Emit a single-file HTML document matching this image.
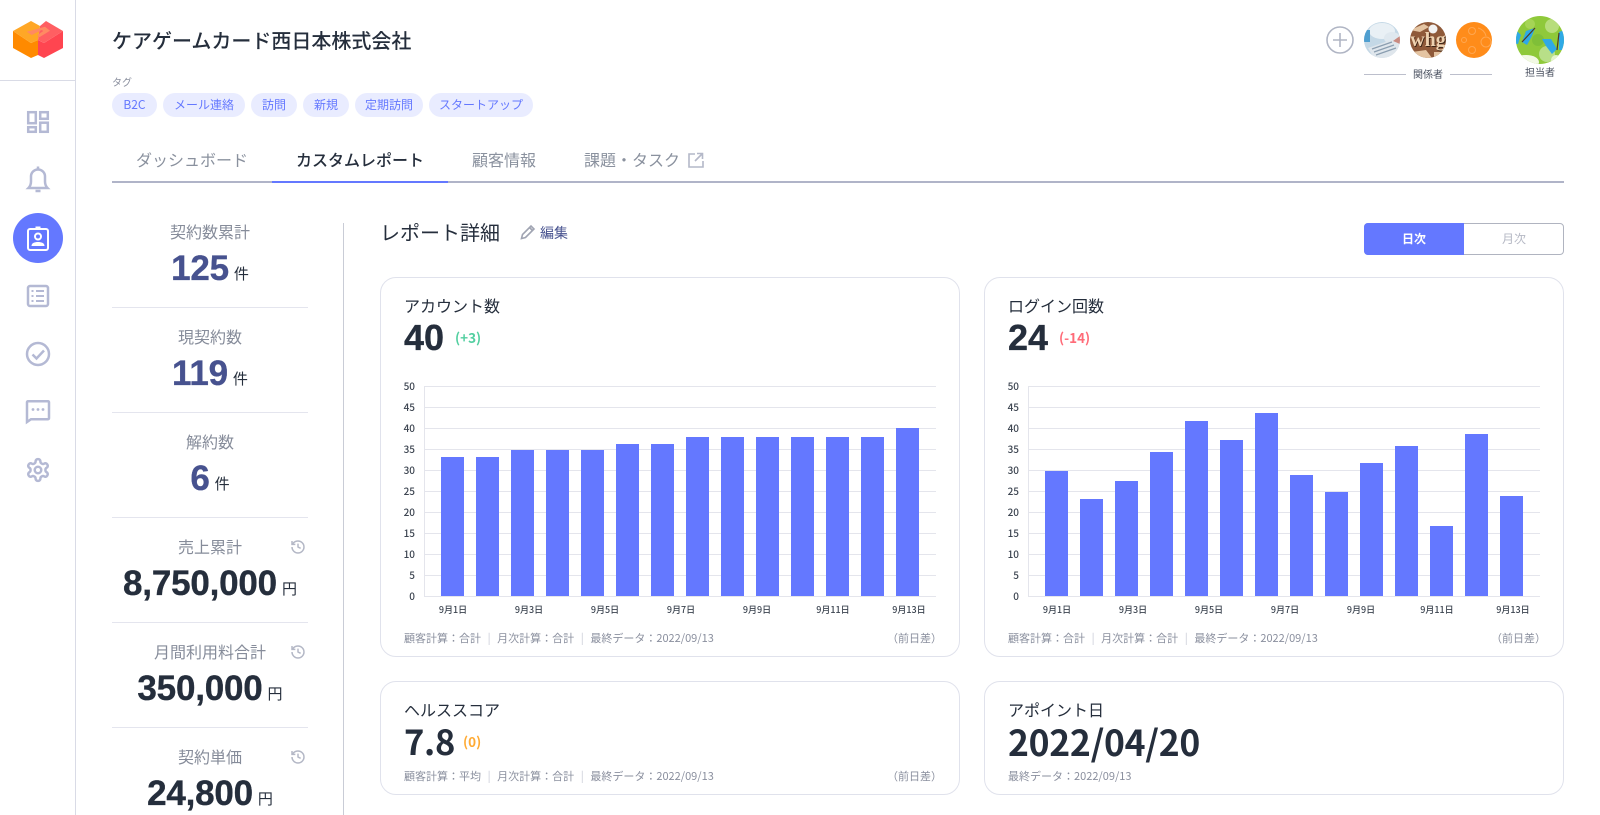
<!DOCTYPE html>
<html lang="ja"><head><meta charset="utf-8"><title>カスタムレポート</title>
<style>
*{box-sizing:border-box}
html,body{margin:0;padding:0;width:1600px;height:815px;overflow:hidden;background:#fff}
body{position:relative;font-family:"Noto Sans CJK JP","Liberation Sans",sans-serif;color:#252e3c}
.a{position:absolute;white-space:nowrap}
.c{text-align:center}
.chip{position:absolute;top:93px;height:24px;line-height:23px;border-radius:12px;background:#e9ecff;color:#6478ff;font-size:12px;text-align:center;white-space:nowrap}
.tab{position:absolute;top:147px;line-height:24px;font-size:16px;color:#8a919e;white-space:nowrap}
.lab{position:absolute;left:112px;width:196px;text-align:center;font-size:16px;line-height:24px;color:#868c9a}
.val{position:absolute;left:112px;width:196px;text-align:center;white-space:nowrap;font:700 35px/40px "Liberation Sans",sans-serif;-webkit-text-stroke:.35px currentColor;letter-spacing:-.2px}
.val span{font:400 15px/20px "Noto Sans CJK JP",sans-serif;margin-left:5px;-webkit-text-stroke:0;letter-spacing:0;position:relative;top:-1px}
.hr{position:absolute;left:112px;width:196px;height:1px;background:#e4e5ee}
.card{position:absolute;width:580px;border:1px solid #e0e2ec;border-radius:16px;background:#fff}
.tt{position:absolute;font-size:16px;line-height:24px;white-space:nowrap}
.num{position:absolute;font:700 36px/40px "Liberation Sans",sans-serif;white-space:nowrap;-webkit-text-stroke:.35px currentColor}
.num.n{font-family:"Noto Sans CJK JP",sans-serif;-webkit-text-stroke:0;font-size:34.5px;letter-spacing:-.3px}
.dif{position:absolute;font-size:13.500px;line-height:20px;font-weight:700;white-space:nowrap}
.ft{position:absolute;font-size:11px;line-height:16px;color:#8a8f9e;white-space:nowrap}
.ft i{font-style:normal;color:#c8cad6;margin:0 6.600px}
svg{position:absolute;overflow:visible}
</style></head><body>

<!-- sidebar -->
<div class="a" style="left:75px;top:0;width:1px;height:815px;background:#d9dbe6"></div>
<div class="a" style="left:0;top:80px;width:75px;height:1px;background:#d9dbe6"></div>

<svg style="left:0;top:0" width="76" height="500" viewBox="0 0 76 500">
<polygon points="13,31 31,43 38,40 38,55 31,58 13,48" fill="#ff8a00"/>
<polygon points="38,40 44,43 63,31 63,48 44,58 38,55" fill="#ff4550"/>
<polygon points="13,31 31,21 40,26 38,40 31,43" fill="#ffa726"/>
<polygon points="40,26 46,21 63,31 44,43 38,40" fill="#ff5f62"/>
<polygon points="26.700,31.700 45,26.700 50,30.700 39.300,37.300 37.300,35 43.300,31 41.700,30 31.700,35" fill="#ff8a62"/>
<g fill="none" stroke="#b4b9d4" stroke-width="2.500">
<rect x="28.200" y="112.200" width="7.600" height="11"/><rect x="40.200" y="112.200" width="7.600" height="6.600"/><rect x="28.200" y="127.200" width="7.600" height="4.600"/><rect x="40.200" y="122.700" width="7.600" height="9.100"/>
<path d="M28.500 188c1.500-1.500 2.500-3.500 2.500-6.500v-5a7 7 0 0 1 14 0v5c0 3 1 5 2.500 6.500z"/>
<path d="M38 169v-2.500M35.500 191h5"/>
<rect x="28" y="286" width="20" height="20" rx="2"/>
<path d="M36 291h8M36 296h8M36 301h8" stroke-width="2"/><path d="M31.500 291h2M31.500 296h2M31.500 301h2" stroke-width="2"/>
<circle cx="38" cy="354" r="11"/><path d="M32.500 354.500l4 4 7.500-8"/>
<path d="M28 401.200h20a1 1 0 0 1 1 1v16a1 1 0 0 1-1 1H31l-4 2.800V402.200a1 1 0 0 1 1-1z"/>
<g transform="translate(25,457) scale(1.083)" stroke-width="2.300"><path d="M12.220 2h-.44a2 2 0 0 0-2 2v.18a2 2 0 0 1-1 1.730l-.43.250a2 2 0 0 1-2 0l-.15-.08a2 2 0 0 0-2.730.730l-.22.380a2 2 0 0 0 .730 2.730l.15.100a2 2 0 0 1 1 1.720v.510a2 2 0 0 1-1 1.740l-.15.090a2 2 0 0 0-.730 2.730l.22.380a2 2 0 0 0 2.730.730l.15-.08a2 2 0 0 1 2 0l.43.250a2 2 0 0 1 1 1.730V20a2 2 0 0 0 2 2h.44a2 2 0 0 0 2-2v-.18a2 2 0 0 1 1-1.730l.43-.25a2 2 0 0 1 2 0l.15.080a2 2 0 0 0 2.730-.730l.22-.39a2 2 0 0 0-.730-2.730l-.15-.08a2 2 0 0 1-1-1.740v-.5a2 2 0 0 1 1-1.740l.15-.09a2 2 0 0 0 .730-2.730l-.22-.38a2 2 0 0 0-2.730-.730l-.15.080a2 2 0 0 1-2 0l-.43-.25a2 2 0 0 1-1-1.730V4a2 2 0 0 0-2-2z"/><circle cx="12" cy="12" r="3"/></g>
</g>
<g fill="#b4b9d4"><circle cx="33" cy="409.500" r="1.400"/><circle cx="38" cy="409.500" r="1.400"/><circle cx="43" cy="409.500" r="1.400"/></g>
<circle cx="38" cy="238" r="25" fill="#6478ff"/>
<g fill="none" stroke="#fff" stroke-width="2"><rect x="28" y="229" width="20" height="21" rx="2"/><circle cx="38" cy="236.500" r="3"/><rect x="35.500" y="226.500" width="5" height="3" fill="#fff" stroke="none"/></g>
<path d="M31.500 246c0-3 3-4 6.500-4s6.500 1 6.500 4z" fill="#fff"/>
</svg>

<!-- header -->
<div class="a" style="left:112px;top:25px;font-size:20px;line-height:30px;font-weight:500">ケアゲームカード西日本株式会社</div>
<div class="a" style="left:112px;top:75px;font-size:10px;line-height:14px;color:#8a8f9e">タグ</div>
<div class="chip" style="left:112px;width:45px">B2C</div>
<div class="chip" style="left:163px;width:82px">メール連絡</div>
<div class="chip" style="left:251px;width:46px">訪問</div>
<div class="chip" style="left:303px;width:46px">新規</div>
<div class="chip" style="left:355px;width:68px">定期訪問</div>
<div class="chip" style="left:429px;width:104px">スタートアップ</div>

<svg style="left:1300px;top:0" width="300" height="90" viewBox="1300 0 300 90">
<defs>
<clipPath id="c1"><circle cx="1382" cy="40" r="18"/></clipPath>
<clipPath id="c2"><circle cx="1428" cy="40" r="18"/></clipPath>
<clipPath id="c3"><circle cx="1474" cy="40" r="18"/></clipPath>
<clipPath id="c4"><circle cx="1540" cy="40" r="24"/></clipPath>
</defs>
<circle cx="1340" cy="40" r="13" fill="none" stroke="#b0b5c4" stroke-width="1.600"/>
<path d="M1340 33v14M1333 40h14" stroke="#b0b5c4" stroke-width="1.600"/>
<g clip-path="url(#c1)">
<rect x="1364" y="22" width="36" height="36" fill="#c4d8e6"/>
<ellipse cx="1382" cy="31" rx="13" ry="8" fill="#e9f0f5"/><ellipse cx="1392" cy="38" rx="8" ry="6" fill="#dfe8ef"/>
<rect x="1364" y="30" width="6" height="12" fill="#4f9fd0"/>
<polygon points="1368,48 1394,39 1400,44 1400,58 1374,58" fill="#dfe6ec"/>
<path d="M1372 49l20-7M1374 52l20-7M1376 55l20-7" stroke="#8b9eb0" stroke-width="1.200"/>
<polygon points="1393,41 1400,36 1400,44" fill="#c98a80"/>
</g>
<g clip-path="url(#c2)">
<rect x="1410" y="22" width="36" height="36" fill="#8f5a3a"/>
<path d="M1410 30l14-6 5 3-9 5zM1412 52l14-2 6 8h-18zM1434 52h12v6h-12z" fill="#e4c4a2"/>
<circle cx="1433" cy="29" r="4.500" fill="#f2f2f2"/>
<text x="1428.800" y="46.800" text-anchor="middle" font-family="Liberation Serif,serif" font-weight="700" font-size="20" fill="#3b2416">whg</text>
<text x="1428" y="46" text-anchor="middle" font-family="Liberation Serif,serif" font-weight="700" font-size="20" fill="#eed2b0">whg</text>
</g>
<g clip-path="url(#c3)">
<rect x="1456" y="22" width="36" height="36" fill="#ff8c1a"/>
<g fill="none" stroke="#ffa750" stroke-width="1"><circle cx="1472" cy="31" r="3.500"/><circle cx="1486" cy="42" r="5"/><circle cx="1472" cy="50" r="3.500"/><path d="M1478 28c4 1 7 4 8 8"/><circle cx="1464" cy="40" r="2.500"/></g>
</g>
<g clip-path="url(#c4)">
<rect x="1516" y="16" width="48" height="48" fill="#8fc93a"/>
<circle cx="1552" cy="26" r="7" fill="#b7dd7c"/><circle cx="1530" cy="24" r="5" fill="#a5d455"/><circle cx="1547" cy="54" r="8" fill="#b8df88"/><ellipse cx="1526" cy="62" rx="13" ry="7" fill="#f2f9e4"/><circle cx="1556" cy="60" r="5" fill="#e5f4cc"/><circle cx="1538" cy="40" r="6" fill="#7fbf38"/>
<polygon points="1522,42 1526,31 1535,28 1532,36 1527,45" fill="#2fa9e6"/>
<polygon points="1516,30 1521,35 1518,44 1516,44" fill="#2fa9e6"/>
<polygon points="1542,39 1551,39 1557,49 1552,54 1546,46" fill="#2fa9e6"/>
<polygon points="1559,32 1564,30 1564,50 1559,50" fill="#2fa9e6"/>
<path d="M1522 42l13-14M1557 50l2-17" stroke="#4f3a26" stroke-width="1.200"/>
</g>
<path d="M1364 74.500h42M1450 74.500h42" stroke="#bcbfcc"/>
</svg>
<div class="a c" style="left:1406px;width:44px;top:67px;font-size:10px;line-height:14px;color:#4a5160">関係者</div>
<div class="a c" style="left:1516px;width:48px;top:65px;font-size:10px;line-height:14px;color:#4a5160">担当者</div>

<!-- tabs -->
<div class="tab" style="left:136px">ダッシュボード</div>
<div class="tab" style="left:296px;color:#252e3c;font-weight:500">カスタムレポート</div>
<div class="tab" style="left:472px">顧客情報</div>
<div class="tab" style="left:584px">課題・タスク</div>
<svg style="left:688px;top:152px" width="16" height="16" viewBox="0 0 16 16" fill="none" stroke="#b4b8c8" stroke-width="1.600"><path d="M7 2H1v13h14V9M9 1.500h5.500V7M14.500 1.500L7 9"/></svg>
<div class="a" style="left:112px;top:181px;width:1452px;height:2px;background:#b0b4c8"></div>
<div class="a" style="left:272px;top:181px;width:176px;height:2px;background:#6478ff"></div>

<!-- left stats -->
<div class="a" style="left:343px;top:223px;width:1px;height:592px;background:#c9ccd6"></div>
<div class="lab" style="top:219px">契約数累計</div>
<div class="val" style="top:249px;color:#47528f">125<span style="color:#252e3c">件</span></div>
<div class="hr" style="top:307px"></div>
<div class="lab" style="top:324px">現契約数</div>
<div class="val" style="top:354px;color:#47528f">119<span style="color:#252e3c">件</span></div>
<div class="hr" style="top:412px"></div>
<div class="lab" style="top:429px">解約数</div>
<div class="val" style="top:459px;color:#47528f">6<span style="color:#252e3c">件</span></div>
<div class="hr" style="top:517px"></div>
<div class="lab" style="top:534px">売上累計</div>
<div class="val" style="top:564px">8,750,000<span>円</span></div>
<div class="hr" style="top:622px"></div>
<div class="lab" style="top:639px">月間利用料合計</div>
<div class="val" style="top:669px">350,000<span>円</span></div>
<div class="hr" style="top:727px"></div>
<div class="lab" style="top:744px">契約単価</div>
<div class="val" style="top:774px">24,800<span>円</span></div>
<svg style="left:290px;top:539px" width="16" height="16" viewBox="0 0 24 24" fill="none" stroke="#b4b8c6" stroke-width="2.200"><path d="M3 12a9 9 0 1 0 9-9 9.750 9.750 0 0 0-6.740 2.740L3 8"/><path d="M3 3v5h5"/><path d="M12 7v5l4 2"/></svg>
<svg style="left:290px;top:644px" width="16" height="16" viewBox="0 0 24 24" fill="none" stroke="#b4b8c6" stroke-width="2.200"><path d="M3 12a9 9 0 1 0 9-9 9.750 9.750 0 0 0-6.740 2.740L3 8"/><path d="M3 3v5h5"/><path d="M12 7v5l4 2"/></svg>
<svg style="left:290px;top:749px" width="16" height="16" viewBox="0 0 24 24" fill="none" stroke="#b4b8c6" stroke-width="2.200"><path d="M3 12a9 9 0 1 0 9-9 9.750 9.750 0 0 0-6.740 2.740L3 8"/><path d="M3 3v5h5"/><path d="M12 7v5l4 2"/></svg>

<!-- report head -->
<div class="a" style="left:380px;top:217px;font-size:20px;line-height:30px">レポート詳細</div>
<svg style="left:520px;top:224px" width="16" height="16" viewBox="0 0 16 16" fill="none" stroke="#a0a4b2" stroke-width="1.600"><path d="M1.500 14.500l1-4L11 2l3 3-8.500 8.500z"/><path d="M9.500 3.500l3 3"/></svg>
<div class="a" style="left:540px;top:223px;font-size:14px;line-height:20px;color:#47528f">編集</div>
<div class="a" style="left:1364px;top:223px;width:200px;height:32px;border:1px solid #b0b4c0;border-radius:4px"></div>
<div class="a c" style="left:1364px;top:223px;width:100px;height:32px;background:#6478ff;border-radius:4px 0 0 4px;color:#fff;font-size:12px;font-weight:700;line-height:31px">日次</div>
<div class="a c" style="left:1464px;top:223px;width:100px;font-size:12px;line-height:31px;color:#b5b8c4">月次</div>

<!-- cards -->
<div class="card" style="left:380px;top:277px;height:380px"></div>
<div class="card" style="left:984px;top:277px;height:380px"></div>
<div class="card" style="left:380px;top:681px;height:114px"></div>
<div class="card" style="left:984px;top:681px;height:114px"></div>

<div class="tt" style="left:404px;top:293px">アカウント数</div>
<div class="num" style="left:404px;top:318px">40</div>
<div class="dif" style="left:455px;top:327px;color:#52cfa0">(+3)</div>
<div class="tt" style="left:1008px;top:293px">ログイン回数</div>
<div class="num" style="left:1008px;top:318px">24</div>
<div class="dif" style="left:1059px;top:327px;color:#ff6b78">(-14)</div>

<div class="ft" style="left:404px;top:630px">顧客計算：合計<i>|</i>月次計算：合計<i>|</i>最終データ：2022/09/13</div>
<div class="ft" style="right:658px;top:630px">（前日差）</div>
<div class="ft" style="left:1008px;top:630px">顧客計算：合計<i>|</i>月次計算：合計<i>|</i>最終データ：2022/09/13</div>
<div class="ft" style="right:54px;top:630px">（前日差）</div>

<div class="tt" style="left:404px;top:697px">ヘルススコア</div>
<div class="num n" style="left:404px;top:720px">7.8</div>
<div class="dif" style="left:463px;top:731px;color:#ffaa33">(0)</div>
<div class="ft" style="left:404px;top:768px">顧客計算：平均<i>|</i>月次計算：合計<i>|</i>最終データ：2022/09/13</div>
<div class="ft" style="right:658px;top:768px">（前日差）</div>

<div class="tt" style="left:1008px;top:697px">アポイント日</div>
<div class="num n" style="left:1008px;top:722px;font-size:35.500px;letter-spacing:-.3px">2022/04/20</div>
<div class="ft" style="left:1008px;top:768px">最終データ：2022/09/13</div>

<!-- charts -->
<svg style="left:0;top:0" width="1600" height="815" viewBox="0 0 1600 815">
<g stroke="#e4e5ec" stroke-width="1" fill="none">
<path d="M424.500 386v210.500M424 386.500h512M424 407.500h512M424 428.500h512M424 449.500h512M424 470.500h512M424 491.500h512M424 512.500h512M424 533.500h512M424 554.500h512M424 575.500h512M424 596.500h512"/>
<path d="M1028.500 386v210.500M1028 386.500h512M1028 407.500h512M1028 428.500h512M1028 449.500h512M1028 470.500h512M1028 491.500h512M1028 512.500h512M1028 533.500h512M1028 554.500h512M1028 575.500h512M1028 596.500h512"/>
</g>
<g fill="#6478ff">
<rect x="441" y="457" width="23" height="139"/><rect x="476" y="457" width="23" height="139"/><rect x="511" y="450" width="23" height="146"/><rect x="546" y="450" width="23" height="146"/><rect x="581" y="450" width="23" height="146"/><rect x="616" y="444" width="23" height="152"/><rect x="651" y="444" width="23" height="152"/><rect x="686" y="437" width="23" height="159"/><rect x="721" y="437" width="23" height="159"/><rect x="756" y="437" width="23" height="159"/><rect x="791" y="437" width="23" height="159"/><rect x="826" y="437" width="23" height="159"/><rect x="861" y="437" width="23" height="159"/><rect x="896" y="428" width="23" height="168"/>
<rect x="1045" y="471" width="23" height="125"/><rect x="1080" y="499" width="23" height="97"/><rect x="1115" y="481" width="23" height="115"/><rect x="1150" y="452" width="23" height="144"/><rect x="1185" y="421" width="23" height="175"/><rect x="1220" y="440" width="23" height="156"/><rect x="1255" y="413" width="23" height="183"/><rect x="1290" y="475" width="23" height="121"/><rect x="1325" y="492" width="23" height="104"/><rect x="1360" y="463" width="23" height="133"/><rect x="1395" y="446" width="23" height="150"/><rect x="1430" y="526" width="23" height="70"/><rect x="1465" y="434" width="23" height="162"/><rect x="1500" y="496" width="23" height="100"/>
</g>
<g font-family="Noto Sans CJK JP,Liberation Sans,sans-serif" font-size="10" font-weight="500" fill="#3c4450" text-anchor="end">
<text x="415" y="390">50</text><text x="415" y="411">45</text><text x="415" y="432">40</text><text x="415" y="453">35</text><text x="415" y="474">30</text><text x="415" y="495">25</text><text x="415" y="516">20</text><text x="415" y="537">15</text><text x="415" y="558">10</text><text x="415" y="579">5</text><text x="415" y="600">0</text>
<text x="1019" y="390">50</text><text x="1019" y="411">45</text><text x="1019" y="432">40</text><text x="1019" y="453">35</text><text x="1019" y="474">30</text><text x="1019" y="495">25</text><text x="1019" y="516">20</text><text x="1019" y="537">15</text><text x="1019" y="558">10</text><text x="1019" y="579">5</text><text x="1019" y="600">0</text>
</g>
<g font-family="Noto Sans CJK JP,Liberation Sans,sans-serif" font-size="9" font-weight="500" fill="#3c4450" text-anchor="middle">
<text x="453" y="613">9月1日</text><text x="529" y="613">9月3日</text><text x="605" y="613">9月5日</text><text x="681" y="613">9月7日</text><text x="757" y="613">9月9日</text><text x="833" y="613">9月11日</text><text x="909" y="613">9月13日</text>
<text x="1057" y="613">9月1日</text><text x="1133" y="613">9月3日</text><text x="1209" y="613">9月5日</text><text x="1285" y="613">9月7日</text><text x="1361" y="613">9月9日</text><text x="1437" y="613">9月11日</text><text x="1513" y="613">9月13日</text>
</g>
</svg>
</body></html>
